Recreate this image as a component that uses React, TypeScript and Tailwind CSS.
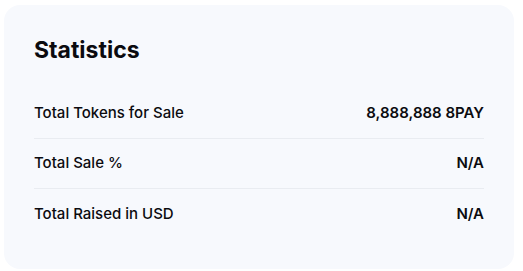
export default function App() {
  const rows = [
    { label: "Total Tokens for Sale", value: "8,888,888 8PAY" },
    { label: "Total Sale %", value: "N/A" },
    { label: "Total Raised in USD", value: "N/A" },
  ];

  return (
    <div className="min-h-screen bg-white pl-[4px] pt-[5px]" style={{ fontFamily: "Inter, sans-serif" }}>
      <div className="w-[510px] rounded-[16px] bg-[#F7F9FD] px-[30px] pb-[30px] pt-[30px]">
        <h2 className="mb-[23px] text-[23px] font-bold leading-[31px] text-[#0b0b0f]">Statistics</h2>
        <div className="flex flex-col">
          {rows.map((row, i) => (
            <div
              key={row.label}
              className={`flex h-[50px] items-center justify-between ${
                i < rows.length - 1 ? "border-b border-[#E9ECF1]" : ""
              }`}
            >
              <span className="text-[15px] font-medium text-[#0b0b0f]">{row.label}</span>
              <span className="text-[15px] font-semibold text-[#0b0b0f]">{row.value}</span>
            </div>
          ))}
        </div>
      </div>
    </div>
  );
}
